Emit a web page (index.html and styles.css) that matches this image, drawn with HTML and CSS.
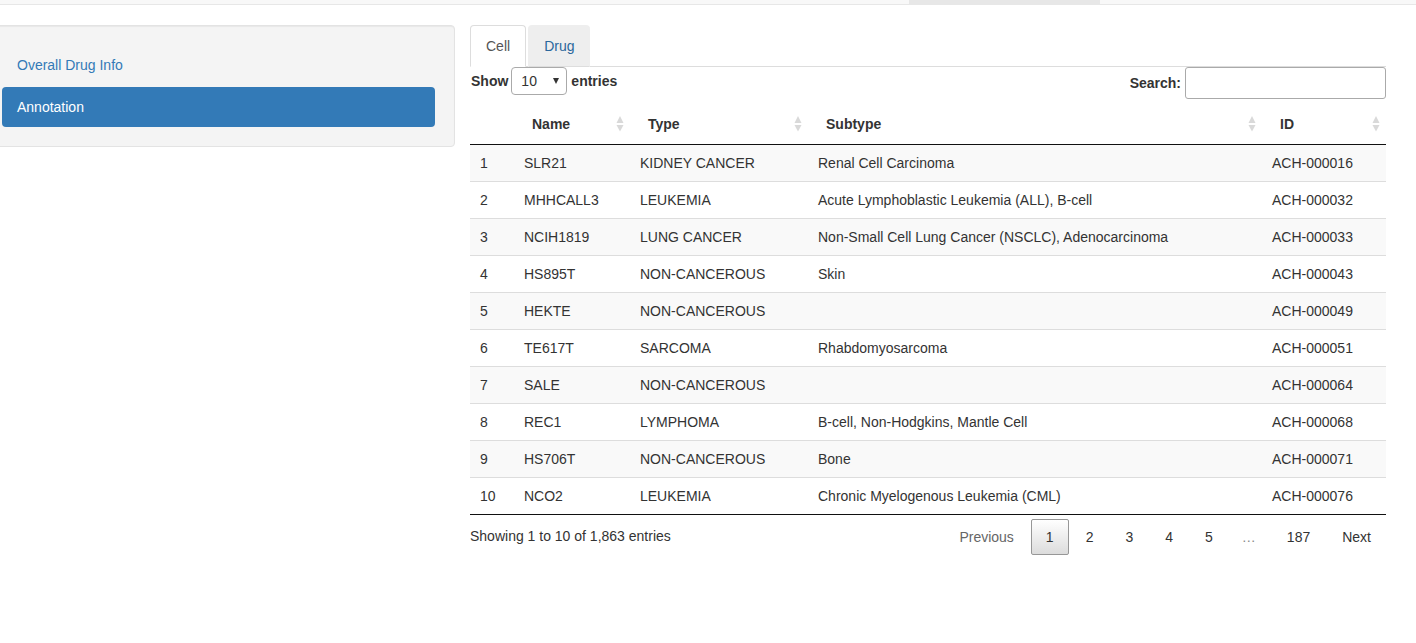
FILE: index.html
```html
<!DOCTYPE html>
<html lang="en">
<head>
<meta charset="utf-8">
<title>Annotation</title>
<link rel="stylesheet" href="styles.css">
</head>
<body>
<div class="navbar">
  <div class="nav-spacer"></div>
  <div class="nav-active"></div>
</div>
<div class="layout">
  <aside class="sidebar">
    <div class="well">
      <ul class="pills">
        <li><a href="#">Overall Drug Info</a></li>
        <li class="active"><a href="#">Annotation</a></li>
      </ul>
    </div>
  </aside>
  <main class="main">
    <ul class="tabs">
      <li class="active"><a href="#">Cell</a></li>
      <li class="hover"><a href="#">Drug</a></li>
    </ul>
    <div class="dt-wrapper">
      <div class="dt-controls">
        <label class="dt-length">Show
          <span class="select-wrap"><span class="select-val">10</span><span class="select-arrow"></span></span>
          entries</label>
        <label class="dt-filter">Search:<input type="search" class="search-input"></label>
      </div>
      <table class="dt">
        <colgroup>
          <col class="c-idx"><col class="c-name"><col class="c-type"><col class="c-sub"><col class="c-id">
        </colgroup>
        <thead>
          <tr>
            <th class="th-idx"></th>
            <th><div class="th-in"><span>Name</span><svg class="sort" width="8" height="16" viewBox="0 0 8 16"><polygon points="4,0 0.5,7 7.5,7" /><polygon points="0.5,9 7.5,9 4,15.5" /></svg></div></th>
            <th><div class="th-in"><span>Type</span><svg class="sort" width="8" height="16" viewBox="0 0 8 16"><polygon points="4,0 0.5,7 7.5,7" /><polygon points="0.5,9 7.5,9 4,15.5" /></svg></div></th>
            <th><div class="th-in"><span>Subtype</span><svg class="sort" width="8" height="16" viewBox="0 0 8 16"><polygon points="4,0 0.5,7 7.5,7" /><polygon points="0.5,9 7.5,9 4,15.5" /></svg></div></th>
            <th><div class="th-in"><span>ID</span><svg class="sort" width="8" height="16" viewBox="0 0 8 16"><polygon points="4,0 0.5,7 7.5,7" /><polygon points="0.5,9 7.5,9 4,15.5" /></svg></div></th>
          </tr>
        </thead>
        <tbody>
          <tr><td>1</td><td>SLR21</td><td>KIDNEY CANCER</td><td>Renal Cell Carcinoma</td><td>ACH-000016</td></tr>
          <tr><td>2</td><td>MHHCALL3</td><td>LEUKEMIA</td><td>Acute Lymphoblastic Leukemia (ALL), B-cell</td><td>ACH-000032</td></tr>
          <tr><td>3</td><td>NCIH1819</td><td>LUNG CANCER</td><td>Non-Small Cell Lung Cancer (NSCLC), Adenocarcinoma</td><td>ACH-000033</td></tr>
          <tr><td>4</td><td>HS895T</td><td>NON-CANCEROUS</td><td>Skin</td><td>ACH-000043</td></tr>
          <tr><td>5</td><td>HEKTE</td><td>NON-CANCEROUS</td><td></td><td>ACH-000049</td></tr>
          <tr><td>6</td><td>TE617T</td><td>SARCOMA</td><td>Rhabdomyosarcoma</td><td>ACH-000051</td></tr>
          <tr><td>7</td><td>SALE</td><td>NON-CANCEROUS</td><td></td><td>ACH-000064</td></tr>
          <tr><td>8</td><td>REC1</td><td>LYMPHOMA</td><td>B-cell, Non-Hodgkins, Mantle Cell</td><td>ACH-000068</td></tr>
          <tr><td>9</td><td>HS706T</td><td>NON-CANCEROUS</td><td>Bone</td><td>ACH-000071</td></tr>
          <tr><td>10</td><td>NCO2</td><td>LEUKEMIA</td><td>Chronic Myelogenous Leukemia (CML)</td><td>ACH-000076</td></tr>
        </tbody>
      </table>
      <div class="dt-footer">
        <div class="dt-info">Showing 1 to 10 of 1,863 entries</div>
        <div class="dt-paginate">
          <a class="pg disabled" href="#">Previous</a>
          <a class="pg current" href="#">1</a>
          <a class="pg" href="#">2</a>
          <a class="pg" href="#">3</a>
          <a class="pg" href="#">4</a>
          <a class="pg" href="#">5</a>
          <span class="ellipsis">…</span>
          <a class="pg" href="#">187</a>
          <a class="pg" href="#">Next</a>
        </div>
      </div>
    </div>
  </main>
</div>
</body>
</html>
```
FILE: styles.css
```css
* { box-sizing: border-box; }
html, body { margin: 0; padding: 0; background: #fff; }
body {
  font-family: "Liberation Sans", Arial, sans-serif;
  font-size: 14px;
  line-height: 20px;
  color: #333;
  overflow: hidden;
}
a { text-decoration: none; }

.navbar {
  display: flex;
  height: 5px;
  background: #f8f8f8;
  border-bottom: 1px solid #e7e7e7;
  margin-bottom: 20px;
}
.nav-spacer { flex: 0 0 909px; }
.nav-active { flex: 0 0 191px; background: #e7e7e7; }

.layout { display: flex; align-items: flex-start; }

.sidebar { flex: 0 0 455px; }
.well {
  margin-left: -18px;
  width: calc(100% + 18px);
  background: #f4f4f4;
  border: 1px solid #e3e3e3;
  border-radius: 4px;
  padding: 19px;
  box-shadow: inset 0 1px 1px rgba(0,0,0,.05);
}
.pills { list-style: none; margin: 0; padding: 0; }
.pills li + li { margin-top: 2px; }
.pills a {
  display: block;
  padding: 10px 15px;
  border-radius: 4px;
  color: #337ab7;
}
.pills .active a { background: #337ab7; color: #fff; }

.main { flex: 0 0 916px; margin-left: 15px; }

.tabs {
  list-style: none;
  margin: 0;
  padding: 0;
  display: flex;
  border-bottom: 1px solid #ddd;
}
.tabs li { margin-bottom: -1px; }
.tabs a {
  display: block;
  padding: 10px 15px;
  margin-right: 2px;
  border: 1px solid transparent;
  border-radius: 4px 4px 0 0;
  color: #337ab7;
}
.tabs .active a {
  color: #555;
  background: #fff;
  border-color: #ddd #ddd transparent;
}
.tabs .hover a {
  color: #2b679c;
  background: #eee;
  border-color: #eee #eee #ddd;
}

.dt-controls {
  display: flex;
  justify-content: space-between;
  align-items: flex-start;
}
.dt-length, .dt-filter {
  display: flex;
  align-items: center;
  font-weight: 700;
}
.dt-length { height: 28px; margin-left: 1px; }
.select-wrap {
  display: flex;
  align-items: center;
  justify-content: space-between;
  width: 56px;
  height: 28px;
  margin: 0 4px 0 3px;
  padding: 0 7px 0 9px;
  border: 1px solid #aaa;
  border-radius: 4px;
  background: #fff;
  font-weight: 400;
  color: #333;
}
.select-arrow {
  width: 0; height: 0;
  border-left: 3.5px solid transparent;
  border-right: 3.5px solid transparent;
  border-top: 6px solid #333;
}
.dt-filter { height: 32px; }
.search-input {
  width: 201px;
  height: 32px;
  margin: 0 0 0 4px;
  border: 1px solid #aaa;
  border-radius: 3px;
  padding: 5px;
  font: inherit;
  background: #fff;
}

table.dt {
  width: 916px;
  margin-top: 5px;
  table-layout: fixed;
  border-collapse: separate;
  border-spacing: 0;
  border-bottom: 1px solid #111;
}
.c-idx { width: 44px; }
.c-name { width: 116px; }
.c-type { width: 178px; }
.c-sub { width: 454px; }
.c-id { width: 124px; }

.dt th {
  text-align: left;
  font-weight: 700;
  padding: 10px 6px 10px 18px;
  border-bottom: 1px solid #111;
}
.th-in {
  display: flex;
  justify-content: space-between;
  align-items: center;
}
.sort { fill: #d9d9d9; display: block; }
.dt td {
  padding: 8px 10px;
  border-top: 1px solid #ddd;
  white-space: nowrap;
}
.dt tbody tr:first-child td { border-top: none; }
.dt tbody tr:nth-child(odd) td { background: #f9f9f9; }

.dt-footer {
  display: flex;
  justify-content: space-between;
  align-items: flex-start;
}
.dt-info { padding-top: 10.5px; }
.dt-paginate {
  display: flex;
  align-items: center;
  padding-top: 4px;
}
.pg {
  display: block;
  padding: 7px 14px;
  margin-left: 2px;
  border: 1px solid transparent;
  border-radius: 2px;
  color: #333;
  min-width: 21px;
  text-align: center;
}
.pg.disabled { color: #666; }
.pg.current {
  border-color: #979797;
  background: linear-gradient(to bottom, #fff 0%, #dcdcdc 100%);
}
.ellipsis { padding: 0 14px; color: #888; }
```
